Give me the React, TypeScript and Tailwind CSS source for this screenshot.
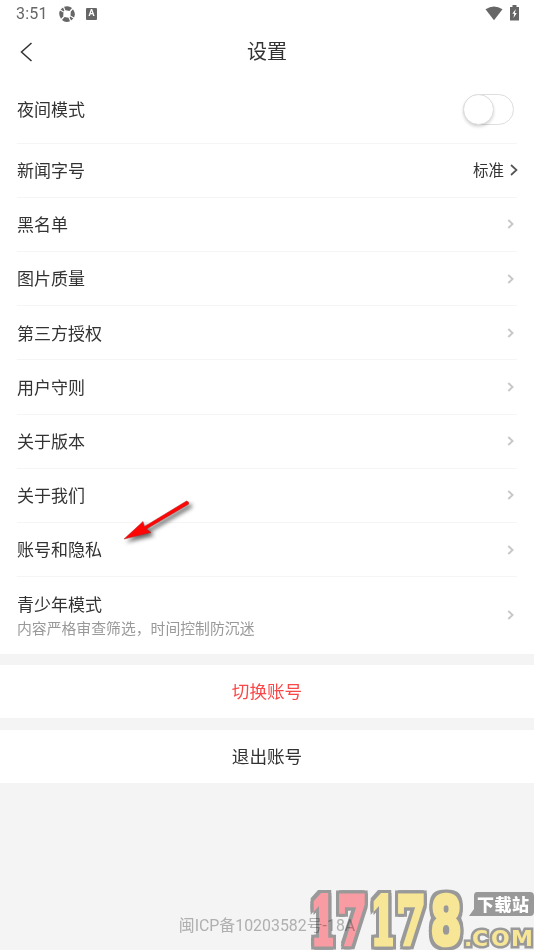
import React from 'react';

const ROWS = ['黑名单', '图片质量', '第三方授权', '用户守则', '关于版本', '关于我们', '账号和隐私'];

const Chevron: React.FC<{ dark?: boolean }> = ({ dark }) => (
  <svg
    width="8"
    height="12"
    viewBox="0 0 8 12"
    fill="none"
    strokeWidth={dark ? 1.7 : 2}
    className={dark ? 'stroke-[#555]' : 'mr-[3px] stroke-[#c8c8c8]'}
  >
    <path d={dark ? 'M1 1L6.5 6L1 11' : 'M2.3 2L6.5 6L2.3 10'} />
  </svg>
);

const StatusBar: React.FC = () => (
  <div className="flex h-[27px] items-center px-[15px] text-[#666]">
    <span className="w-[44px] pt-px pl-px text-[16px] leading-none tracking-[0.2px]">3:51</span>
    <svg width="16" height="16" viewBox="0 0 16 16" fill="#666">
      <path d="M5 0.8Q9.5 -1 13 2L10.5 5L6.5 4.2Z" />
      <path d="M14 3.2Q17 7.5 15 11.5L11.5 9.5L11.8 5.5Z" />
      <path d="M11 15.2Q6.5 17 3 14L5.5 11L9.5 11.8Z" />
      <path d="M2 12.8Q-1 8.5 1 4.5L4.5 6.5L4.2 10.5Z" />
      <path d="M1.6 3.4L4 1.4L5.4 4.8L4.8 5.4Z M14.4 12.6L12 14.6L10.6 11.2L11.2 10.6Z" />
    </svg>
    <span className="ml-[11px] flex h-3 w-[11px] items-center justify-center rounded-[1px] bg-[#666] text-[9px] font-bold leading-none text-white">
      A
    </span>
    <svg width="18" height="15" viewBox="0 0 18 15" className="ml-auto" fill="#666">
      <path d="M0.5 3.2Q9 -2.4 17.5 3.2L9 14.2Z" />
    </svg>
    <svg width="9" height="16" viewBox="0 0 9 16" className="ml-[7px] -mt-[2px]">
      <path d="M2.5 0H6.5V2H9V15.5H0V2H2.5Z" fill="#666" />
      <path d="M5.8 4L2.3 8.8H4.2L3.5 13L6.8 8H4.8Z" fill="#fff" />
    </svg>
  </div>
);

const Arrow: React.FC = () => (
  <svg width="80" height="56" viewBox="0 0 80 56" className="absolute left-[116px] top-[496px] drop-shadow-[3px_3px_2px_rgba(0,0,0,0.6)]">
    <path d="M8 43L27 25.5L28.5 30.5L70.5 5Q73.5 5.5 72.5 8.2L30.5 33L35 36.5Z" fill="#ff0606" stroke="#a22" strokeWidth="0.5" />
  </svg>
);

const DIGITS = [
  { char: '1', x: 323, sx: 0.54, fill: '#f99ba2' },
  { char: '7', x: 352, sx: 0.65, fill: '#f99ba2' },
  { char: '1', x: 383, sx: 0.54, fill: '#f7e696' },
  { char: '7', x: 411, sx: 0.65, fill: '#f7e696' },
  { char: '8', x: 446, sx: 0.68, fill: '#f7e696' },
];

const Watermark: React.FC = () => (
  <svg width="234" height="66" viewBox="300 884 234 66" className="absolute bottom-0 right-0">
    <g
      fontWeight="700"
      textAnchor="middle"
      strokeLinejoin="miter"
      className="[filter:drop-shadow(3px_0_0_#999)_drop-shadow(-3px_0_0_#999)_drop-shadow(0_3px_0_#999)_drop-shadow(0_-3px_0_#999)]"
    >
      {DIGITS.map((d, i) => (
        <text
          key={i}
          transform={`translate(${d.x} 944) scale(${d.sx} 1)`}
          fontFamily={d.char === '8' ? 'DejaVu Sans, sans-serif' : 'DejaVu Serif, serif'}
          fontSize="65"
          strokeWidth="4"
          vectorEffect="non-scaling-stroke"
          stroke={d.fill}
          fill={d.fill}
        >
          {d.char}
        </text>
      ))}
    </g>
    <text
      x="464 472 491 511"
      y="946"
      fontFamily="DejaVu Sans, sans-serif"
      fontWeight="700"
      fontSize="22"
      stroke="#999"
      strokeWidth="5"
      paintOrder="stroke"
      fill="#f7e696"
    >
      .COM
    </text>
    <path d="M477 892H530Q534 892 534 896V912Q534 916 530 916H469L474 909V896Q474 892 477 892Z" fill="#999" />
    <text x="477" y="911" fontSize="17" fontWeight="900" fontFamily="Noto Sans CJK SC, sans-serif" fill="#fff" textLength="52">
      下载站
    </text>
  </svg>
);

export default function App() {
  return (
    <div className="relative flex h-[950px] w-[534px] flex-col overflow-hidden bg-[#f4f4f4] font-[Roboto,'Noto_Sans_CJK_SC',sans-serif] text-[17px] text-[#333]">
      <div className="bg-white">
        <StatusBar />
        <header className="grid h-[49px] grid-cols-3 items-center px-5">
          <svg width="13" height="20" viewBox="0 0 13 20" fill="none" stroke="#333" strokeWidth="1.5">
            <path d="M11.5 1L1.5 10L11.5 19" />
          </svg>
          <h1 className="pt-px text-center text-[20px] leading-none">设置</h1>
        </header>

        <div className="px-[17px]">
          <div className="flex h-[67.6px] items-center justify-between border-b border-[#f5f5f5]">
            <span className="pt-[3px]">夜间模式</span>
            <span className="mr-[3px] flex h-[31px] w-[51px] rounded-full border border-[#dedede]">
              <span className="-mt-px -ml-px h-[31px] w-[31px] rounded-full border border-[#ddd] bg-white shadow-[0_2px_3px_rgba(0,0,0,0.15)]" />
            </span>
          </div>
          <div className="flex h-[54.2px] items-center justify-between border-b border-[#f5f5f5]">
            <span className="pt-[3px]">新闻字号</span>
            <span className="-mr-px flex items-center gap-[6px] text-[15.5px]">
              <span className="pt-[3px]">标准</span>
              <Chevron dark />
            </span>
          </div>
          {ROWS.map((label) => (
            <div key={label} className="flex h-[54.2px] items-center justify-between border-b border-[#f5f5f5]">
              <span className="pt-[3px]">{label}</span>
              <Chevron />
            </div>
          ))}
          <div className="flex h-[76.6px] items-center justify-between">
            <div className="pt-px">
              <div className="leading-[26px]">青少年模式</div>
              <div className="text-[14.85px] leading-[22px] text-[#999]">内容严格审查筛选，时间控制防沉迷</div>
            </div>
            <Chevron />
          </div>
        </div>
      </div>

      <button className="mt-[11px] h-[53px] shrink-0 bg-white pt-0.5 text-[17.6px] text-[#fa4848]">切换账号</button>
      <button className="mt-[12px] h-[53px] shrink-0 bg-white pt-0.5 text-[17.6px]">退出账号</button>

      <Arrow />
      <Watermark />

      <p className="relative mt-auto mb-[12px] text-center text-[15.9px] leading-6 text-[#b8b8b8] mix-blend-multiply">闽ICP备10203582号-18A</p>
    </div>
  );
}
